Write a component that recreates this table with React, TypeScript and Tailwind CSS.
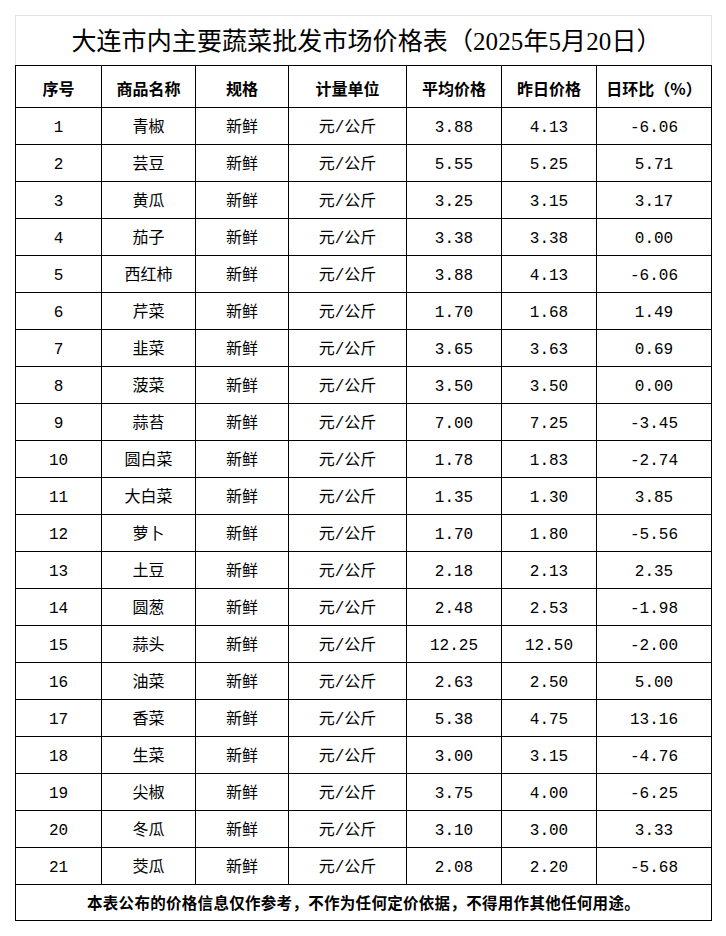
import React from 'react';

const rows: [string, string, string, string, string][] = [
    ['1', '青椒', '3.88', '4.13', '-6.06'],
    ['2', '芸豆', '5.55', '5.25', '5.71'],
    ['3', '黄瓜', '3.25', '3.15', '3.17'],
    ['4', '茄子', '3.38', '3.38', '0.00'],
    ['5', '西红柿', '3.88', '4.13', '-6.06'],
    ['6', '芹菜', '1.70', '1.68', '1.49'],
    ['7', '韭菜', '3.65', '3.63', '0.69'],
    ['8', '菠菜', '3.50', '3.50', '0.00'],
    ['9', '蒜苔', '7.00', '7.25', '-3.45'],
    ['10', '圆白菜', '1.78', '1.83', '-2.74'],
    ['11', '大白菜', '1.35', '1.30', '3.85'],
    ['12', '萝卜', '1.70', '1.80', '-5.56'],
    ['13', '土豆', '2.18', '2.13', '2.35'],
    ['14', '圆葱', '2.48', '2.53', '-1.98'],
    ['15', '蒜头', '12.25', '12.50', '-2.00'],
    ['16', '油菜', '2.63', '2.50', '5.00'],
    ['17', '香菜', '5.38', '4.75', '13.16'],
    ['18', '生菜', '3.00', '3.15', '-4.76'],
    ['19', '尖椒', '3.75', '4.00', '-6.25'],
    ['20', '冬瓜', '3.10', '3.00', '3.33'],
    ['21', '茭瓜', '2.08', '2.20', '-5.68'],
];

const headers = ['序号', '商品名称', '规格', '计量单位', '平均价格', '昨日价格', '日环比（%）'];
const widths = ['w-[86px]', 'w-[94px]', 'w-[93px]', 'w-[118px]', 'w-[95px]', 'w-[95px]', 'w-[115px]'];

export default function App() {
    return (
        <div className="min-h-[936px] bg-white pt-[15px] pl-[15px] text-black">
            <div className="w-[697px]">
                {/* Title */}
                <div className="h-[50px] border border-b-0 border-[#e2e2e2] flex items-center justify-center pt-[2px] pl-[6px] text-[25px] font-['Liberation_Serif','Noto_Sans_CJK_SC',serif] tracking-[0.1px]">
                    大连市内主要蔬菜批发市场价格表（2025年5月20日）
                </div>

                <table className="w-[697px] border-collapse table-fixed font-['Liberation_Mono','Noto_Sans_CJK_SC',monospace] text-[16px]">
                    <colgroup>
                        {widths.map((w, i) => <col key={i} className={w} />)}
                    </colgroup>
                    <thead>
                        <tr className="h-[42px]">
                            {headers.map(h => (
                                <th key={h} className="border border-black p-0 pt-[2px] text-center font-bold font-['Noto_Sans_CJK_SC',sans-serif] text-[16px]">
                                    {h}
                                </th>
                            ))}
                        </tr>
                    </thead>
                    <tbody>
                        {rows.map(r => (
                            <tr key={r[0]} className="h-[37px]">
                                <td className="border border-black p-0 pt-[3px] text-center">{r[0]}</td>
                                <td className="border border-black p-0 pt-[3px] text-center">{r[1]}</td>
                                <td className="border border-black p-0 pt-[3px] text-center">新鲜</td>
                                <td className="border border-black p-0 pt-[3px] text-center">元/公斤</td>
                                <td className="border border-black p-0 pt-[3px] text-center">{r[2]}</td>
                                <td className="border border-black p-0 pt-[3px] text-center">{r[3]}</td>
                                <td className="border border-black p-0 pt-[3px] text-center">{r[4]}</td>
                            </tr>
                        ))}
                        <tr className="h-[36px]">
                            <td colSpan={7} className="border border-black p-0 pt-[1px] text-center font-bold text-[15.5px] tracking-[0.3px] font-['Noto_Sans_CJK_SC',sans-serif]">
                                本表公布的价格信息仅作参考，不作为任何定价依据，不得用作其他任何用途。
                            </td>
                        </tr>
                    </tbody>
                </table>
            </div>
        </div>
    );
}
